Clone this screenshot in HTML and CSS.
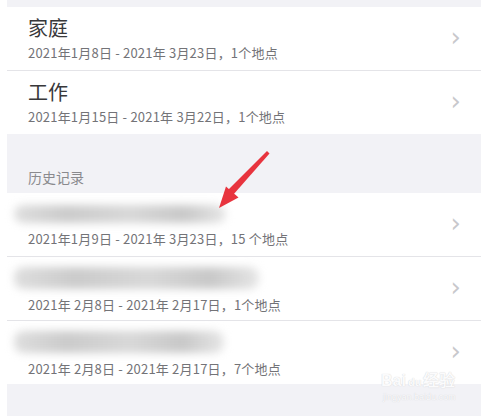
FILE: index.html
```html
<!DOCTYPE html>
<html lang="zh-CN">
<head>
  <meta charset="UTF-8">
  <meta name="viewport" content="width=device-width, initial-scale=1.0">
  <link rel="stylesheet" href="styles.css">
  <title>地点</title>
</head>
<body>
  <div class="screen">
    <div class="top-gap"></div>

    <div class="group">
      <div class="row">
        <div class="text">
          <div class="title">家庭</div>
          <div class="sub">2021年1月8日 - 2021年 3月23日，1个地点</div>
        </div>
        <span class="chev">&#x203A;</span>
      </div>
      <div class="row">
        <div class="text">
          <div class="title">工作</div>
          <div class="sub">2021年1月15日 - 2021年 3月22日，1个地点</div>
        </div>
        <span class="chev">&#x203A;</span>
      </div>
    </div>

    <div class="section-head">历史记录</div>

    <div class="group">
      <div class="row">
        <div class="text">
          <div class="blur b1"></div>
          <div class="sub">2021年1月9日 - 2021年 3月23日，15 个地点</div>
        </div>
        <span class="chev">&#x203A;</span>
      </div>
      <div class="row">
        <div class="text">
          <div class="blur b2"></div>
          <div class="sub">2021年 2月8日 - 2021年 2月17日，1个地点</div>
        </div>
        <span class="chev">&#x203A;</span>
      </div>
      <div class="row">
        <div class="text">
          <div class="blur b3"></div>
          <div class="sub">2021年 2月8日 - 2021年 2月17日，7个地点</div>
        </div>
        <span class="chev">&#x203A;</span>
      </div>
    </div>

    <div class="bottom"></div>
  </div>

  <!-- 标注箭头 -->
  <svg class="arrow" width="498" height="416" viewBox="0 0 498 416">
    <polygon points="267,151 269.5,153.5 233,195 228,190" fill="#e8343e"/>
    <polygon points="219,208 226,186.5 238.5,197.5" fill="#e8343e"/>
  </svg>

  <div class="watermark">
    <div class="wm-logo">Bai<span class="wm-du">du</span>经验</div>
    <div class="wm-url">jingyan.baidu.com</div>
  </div>
</body>
</html>
```
FILE: styles.css
```css
* {
  box-sizing: border-box;
}
body {
  margin: 0;
  background: #fff;
  font-family: "Noto Sans CJK SC", "Noto Sans", sans-serif;
  width: 498px;
  height: 416px;
  overflow: hidden;
  position: relative;
}
.screen {
  margin-left: 7px;
  width: 474px;
  background: #f2f2f6;
}
.top-gap {
  height: 7px;
}
.group {
  background: #fff;
}
.row {
  height: 64px;
  display: flex;
  align-items: center;
  padding-left: 21px;
  padding-right: 20px;
  border-bottom: 1px solid #e4e4e8;
  position: relative;
}
.row:last-child {
  border-bottom: none;
  height: 63px;
}
.text {
  flex: 1;
  display: flex;
  flex-direction: column;
}
.title {
  font-size: 20px;
  line-height: 26px;
  color: #38383a;
}
.sub {
  font-size: 13px;
  line-height: 19px;
  margin-top: 2px;
  letter-spacing: 0.2px;
  color: #737377;
}
.chev {
  font-family: "DejaVu Sans", sans-serif;
  font-size: 26px;
  line-height: 26px;
  color: #c8c8cc;
  margin-top: -4px;
}
.section-head {
  height: 59px;
  padding-left: 21px;
  padding-top: 33px;
  font-size: 14px;
  line-height: 20px;
  color: #8a8a8e;
}
.blur {
  height: 18px;
  margin: 4px 0 4px -14px;
  border-radius: 9px;
  background: linear-gradient(90deg, #dedede 0%, #cbcbcb 25%, #d8d8d8 55%, #c8c8c8 80%, #e6e6e6 100%);
  filter: blur(4px);
}
.b1 {
  width: 212px;
}
.b2 {
  width: 245px;
  height: 22px;
}
.b3 {
  width: 210px;
  height: 22px;
}
.bottom {
  height: 33px;
}
.arrow {
  position: absolute;
  left: 0;
  top: 0;
  pointer-events: none;
}
.watermark {
  position: absolute;
  left: 381px;
  top: 372px;
  color: #fbfbfc;
  text-shadow: 0 0 1px #c9c9cc;
}
.wm-logo {
  font-family: "Liberation Sans", sans-serif;
  font-size: 16px;
  line-height: 18px;
  font-weight: bold;
}
.wm-du {
  font-size: 11px;
  margin: 0 2px;
}
.wm-url {
  font-family: "Liberation Sans", sans-serif;
  font-size: 9px;
  line-height: 12px;
  margin-left: 2px;
}
```
